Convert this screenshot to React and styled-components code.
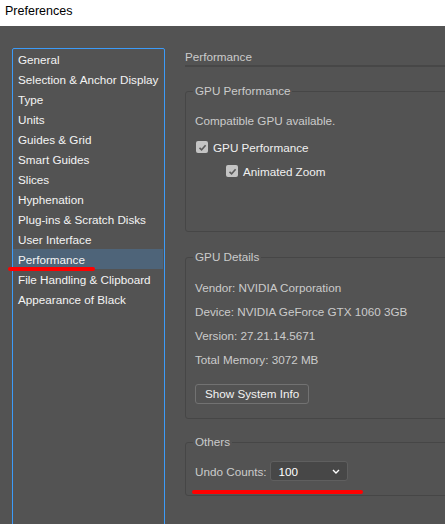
import React from "react";
import styled, { createGlobalStyle } from "styled-components";

const GlobalStyle = createGlobalStyle`
  html, body {
    margin: 0;
    padding: 0;
    background: #535353;
    overflow: hidden;
  }
  body {
    font-family: "Liberation Sans", Arial, sans-serif;
    font-size: 11.7px;
  }
`;

const Window = styled.div`
  width: 445px;
  height: 524px;
  overflow: hidden;
  background: #535353;
`;

const TitleBar = styled.div`
  height: 26px;
  line-height: 22px;
  padding-left: 5px;
  background: #ffffff;
  color: #000;
  font-size: 12.5px;
`;

const Body = styled.div`
  display: flex;
  padding: 22px 0 0 12px;
`;

const Sidebar = styled.ul`
  list-style: none;
  margin: 0;
  padding: 0;
  width: 151px;
  height: 500px;
  flex-shrink: 0;
  border: 1px solid #3c9bf8;
  border-radius: 2px;
`;

const Item = styled.li`
  position: relative;
  height: 20px;
  line-height: 21px;
  margin: 0 1px 0 0;
  padding-left: 5px;
  color: #f4f4f4;
  white-space: nowrap;
  background: ${(p) => (p.$active ? "#4e6479" : "transparent")};

  ${(p) =>
    p.$marked &&
    `
    &::after {
      content: "";
      position: absolute;
      left: -5px;
      top: 18px;
      width: 87px;
      height: 4px;
      border-radius: 2px;
      background: #ff0000;
    }
  `}
`;

const Content = styled.div`
  margin-left: 20px;
  width: 300px;
  flex-shrink: 0;
  color: #cbcbcb;
`;

const SectionTitle = styled.div`
  height: 16px;
  line-height: 16px;
  margin-top: 1px;
  border-bottom: 2px solid #474747;
`;

const Group = styled.fieldset`
  position: relative;
  margin: ${(p) => p.$top}px 0 0 0;
  padding: ${(p) => p.$padTop}px 9px ${(p) => p.$padBottom}px 9px;
  border: 1px solid #464646;
  border-radius: 3px;
  min-width: 0;
`;

const Legend = styled.legend`
  padding: 0 2px;
  margin-left: -2px;
  line-height: 16px;
  color: #cbcbcb;
`;

const Line = styled.div`
  height: 24px;
  line-height: 24px;
  white-space: nowrap;
`;

const CheckRow = styled.label`
  display: flex;
  align-items: center;
  gap: 5px;
  height: 24px;
  margin-top: ${(p) => p.$gap || 0}px;
  margin-left: ${(p) => p.$indent || 1}px;
  color: #f0f0f0;
  white-space: nowrap;
`;

const Box = styled.span`
  display: inline-flex;
  align-items: center;
  justify-content: center;
  width: 12px;
  height: 12px;
  border-radius: 2px;
  background: #c4c4c4;
`;

const Button = styled.button`
  display: block;
  margin-top: 12px;
  height: 20px;
  padding: 0 9px;
  background: #535353;
  border: 1px solid #727272;
  border-radius: 3px;
  color: #f2f2f2;
  font-family: inherit;
  font-size: 11.7px;
  line-height: 18px;
`;

const UndoRow = styled.div`
  position: relative;
  display: flex;
  align-items: center;
  gap: 4px;
  height: 20px;
  white-space: nowrap;

  &::after {
    content: "";
    position: absolute;
    left: -3px;
    top: 29px;
    width: 171px;
    height: 4px;
    border-radius: 2px;
    background: #ff0000;
  }
`;

const Select = styled.div`
  display: flex;
  align-items: center;
  justify-content: space-between;
  box-sizing: border-box;
  width: 78px;
  height: 20px;
  padding: 0 7px;
  background: #474747;
  border: 1px solid #5f5f5f;
  border-radius: 3px;
  color: #ffffff;
`;

const Check = () => (
  <Box>
    <svg width="9" height="9" viewBox="0 0 9 9">
      <polyline
        points="1.5,4.8 3.6,6.8 7.6,2.2"
        fill="none"
        stroke="#5b5b5b"
        strokeWidth="1.6"
      />
    </svg>
  </Box>
);

const Chevron = () => (
  <svg width="8" height="5" viewBox="0 0 8 5">
    <polyline
      points="1,1 4,4 7,1"
      fill="none"
      stroke="#ffffff"
      strokeWidth="1.4"
    />
  </svg>
);

const items = [
  "General",
  "Selection & Anchor Display",
  "Type",
  "Units",
  "Guides & Grid",
  "Smart Guides",
  "Slices",
  "Hyphenation",
  "Plug-ins & Scratch Disks",
  "User Interface",
  "Performance",
  "File Handling & Clipboard",
  "Appearance of Black",
];

const details = [
  "Vendor: NVIDIA Corporation",
  "Device: NVIDIA GeForce GTX 1060 3GB",
  "Version: 27.21.14.5671",
  "Total Memory: 3072 MB",
];

export default function App() {
  return (
    <Window>
      <GlobalStyle />
      <TitleBar>Preferences</TitleBar>
      <Body>
        <Sidebar>
          {items.map((name) => (
            <Item
              key={name}
              $active={name === "Performance"}
              $marked={name === "Performance"}
            >
              {name}
            </Item>
          ))}
        </Sidebar>
        <Content>
          <SectionTitle>Performance</SectionTitle>

          <Group $top={16} $padTop={10} $padBottom={48}>
            <Legend>GPU Performance</Legend>
            <Line>Compatible GPU available.</Line>
            <CheckRow $gap={2}>
              <Check />
              GPU Performance
            </CheckRow>
            <CheckRow $indent={31}>
              <Check />
              Animated Zoom
            </CheckRow>
          </Group>

          <Group $top={17} $padTop={11} $padBottom={14}>
            <Legend>GPU Details</Legend>
            {details.map((d) => (
              <Line key={d}>{d}</Line>
            ))}
            <Button>Show System Info</Button>
          </Group>

          <Group $top={15} $padTop={11} $padBottom={14}>
            <Legend>Others</Legend>
            <UndoRow>
              Undo Counts:
              <Select>
                100
                <Chevron />
              </Select>
            </UndoRow>
          </Group>
        </Content>
      </Body>
    </Window>
  );
}
